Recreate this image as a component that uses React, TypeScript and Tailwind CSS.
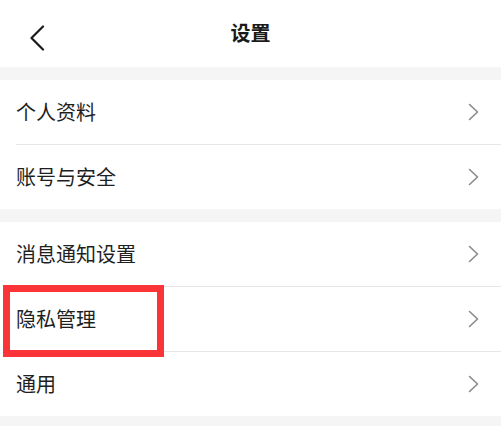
import React from "react";

const font = { fontFamily: '"Noto Sans CJK SC", "Noto Sans", sans-serif' };

function Chevron() {
  return (
    <svg width="12" height="18" viewBox="0 0 12 18" fill="none" className="shrink-0">
      <path d="M1.5 1.5 L9.5 9 L1.5 16.5" stroke="#8a8a8a" strokeWidth="1.6" strokeLinecap="round" strokeLinejoin="round" />
    </svg>
  );
}

function Row({ label, divider }: { label: string; divider?: boolean }) {
  return (
    <div className="pl-4">
      <div className={`h-16 box-content flex items-center justify-between pr-[21px] ${divider ? "border-b border-[#e6e6e6]" : ""}`}>
        <span className="text-[20px] leading-none text-[#1f1f1f]">{label}</span>
        <Chevron />
      </div>
    </div>
  );
}

export default function App() {
  return (
    <div className="w-[501px] h-[426px] bg-[#f5f5f5] relative overflow-hidden" style={font}>
      <div className="h-[67px] bg-white flex items-center justify-center relative">
        <svg width="16" height="26" viewBox="0 0 16 26" fill="none" className="absolute left-[29px] top-[25px]">
          <path d="M14 1.5 L2.5 13 L14 24.5" stroke="#1a1a1a" strokeWidth="2.2" strokeLinecap="round" strokeLinejoin="round" />
        </svg>
        <span className="text-[20px] font-bold leading-none text-[#1a1a1a] mt-[-2px]">设置</span>
      </div>
      <div className="mt-[13px] bg-white">
        <Row label="个人资料" divider />
        <Row label="账号与安全" />
      </div>
      <div className="mt-[13px] bg-white">
        <Row label="消息通知设置" divider />
        <Row label="隐私管理" divider />
        <Row label="通用" />
      </div>
      <div className="absolute left-[3px] top-[285px] w-[161px] h-[72px] border-[7px] border-[#fb3437]" />
    </div>
  );
}
